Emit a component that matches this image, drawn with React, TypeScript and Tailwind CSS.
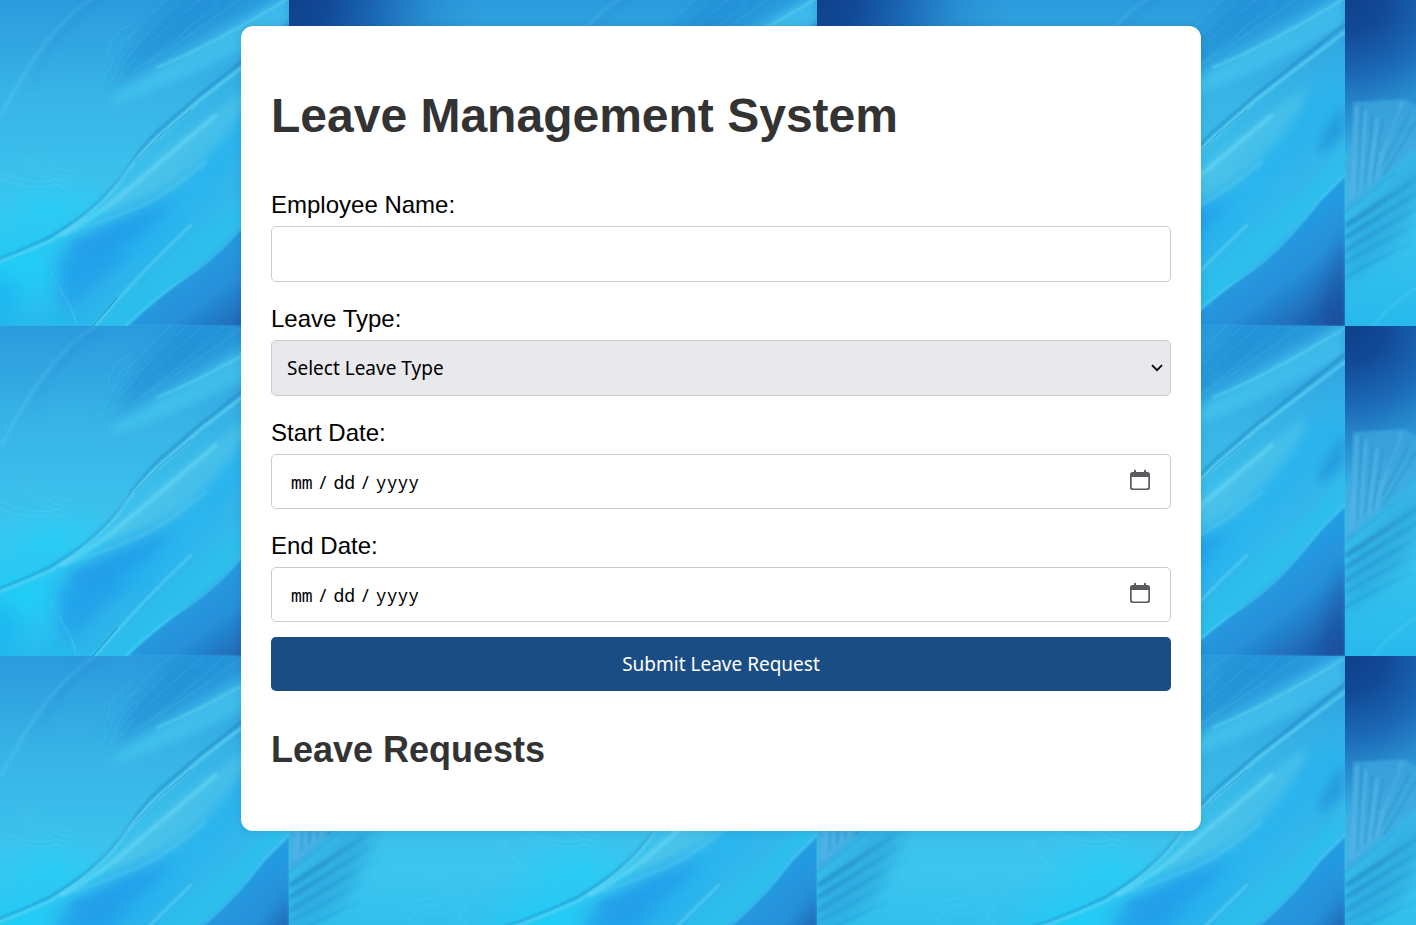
import type { ReactNode } from "react";

function Backdrop() {
  return (
    <svg aria-hidden="true" className="[grid-area:1/1] h-full w-full" preserveAspectRatio="none">
      <defs>
        <linearGradient id="base" x1="0" y1="0" x2="0" y2="1">
          <stop offset="0" stopColor="#2b9add" />
          <stop offset="0.3" stopColor="#38b4e6" />
          <stop offset="0.65" stopColor="#3cc6ef" />
          <stop offset="1" stopColor="#27b9ec" />
        </linearGradient>
        <linearGradient id="corner" x1="0.35" y1="0.2" x2="1" y2="1">
          <stop offset="0" stopColor="#22a8ea" />
          <stop offset="0.55" stopColor="#2690da" />
          <stop offset="1" stopColor="#1a4c9b" />
        </linearGradient>
        <radialGradient id="navy" cx="0" cy="0" r="1">
          <stop offset="0" stopColor="#0e3f8a" />
          <stop offset="0.2" stopColor="#124a97" />
          <stop offset="0.42" stopColor="#1a66b4" stopOpacity="0.95" />
          <stop offset="0.65" stopColor="#2585cb" stopOpacity="0.7" />
          <stop offset="1" stopColor="#2f9edb" stopOpacity="0" />
        </radialGradient>
        <radialGradient id="cyan">
          <stop offset="0" stopColor="#1fcef7" />
          <stop offset="1" stopColor="#25cbf5" stopOpacity="0" />
        </radialGradient>
        <linearGradient id="fan" x1="0" y1="0" x2="0" y2="1">
          <stop offset="0" stopColor="#3ba5de" />
          <stop offset="1" stopColor="#48ade3" />
        </linearGradient>
        <linearGradient id="streak" gradientUnits="userSpaceOnUse" x1="0" y1="0" x2="90" y2="0">
          <stop offset="0" stopColor="#1777bb" />
          <stop offset="0.4" stopColor="#1777bb" stopOpacity="0.8" />
          <stop offset="1" stopColor="#1777bb" stopOpacity="0" />
        </linearGradient>
        <filter id="b1"><feGaussianBlur stdDeviation="1" /></filter>
        <filter id="b2"><feGaussianBlur stdDeviation="1.6" /></filter>
        <filter id="b3"><feGaussianBlur stdDeviation="4" /></filter>
        <filter id="b8" x="-50%" y="-50%" width="200%" height="200%"><feGaussianBlur stdDeviation="9" /></filter>
        <pattern id="waves" x="-239" y="-4" width="528" height="330" patternUnits="userSpaceOnUse">
          <rect width="528" height="330" fill="url(#base)" />
          <ellipse cx="262" cy="268" rx="80" ry="60" fill="url(#cyan)" />
          <ellipse cx="290" cy="215" rx="75" ry="40" fill="url(#cyan)" opacity="0.7" />
          <path d="M0 0H150L70 60L30 100L0 150Z" fill="#2878c4" opacity="0.3" filter="url(#b8)" />
          <rect width="210" height="190" fill="url(#navy)" />

          <path d="M370 50L420 -5H500L440 35L350 90Z" fill="#1d8cd4" opacity="0.65" filter="url(#b8)" />
          <path d="M240 120Q285 30 335 0" stroke="#6ccff4" strokeWidth="3" fill="none" opacity="0.3" filter="url(#b2)" />
          <path d="M290 55Q315 20 350 0L330 0Q290 30 270 90Z" fill="#238fd6" opacity="0.4" filter="url(#b3)" />
          <path d="M360 95Q430 55 528 -5V30Q440 80 345 110Z" fill="#4acdf3" opacity="0.55" filter="url(#b3)" />
          <path d="M395 72Q455 47 528 2" stroke="#69daf8" strokeWidth="2" fill="none" opacity="0.6" filter="url(#b1)" />
          <g fill="none" stroke="#70d5f5" strokeWidth="1" opacity="0.16">
            <path d="M340 90Q360 40 410 0M348 88Q374 45 425 0M357 82Q390 42 443 0M370 78Q420 42 463 0M384 69Q433 37 483 0" />
            <path d="M258 154Q278 178 312 181M261 160Q281 184 310 187M266 150Q286 174 313 175M264 166Q284 188 308 193" />
            <path d="M347 60Q350 34 368 30M350 67Q357 42 372 38M354 75Q362 50 380 44" />
          </g>

          <path d="M300 300L310 246Q350 220 398 175L528 50V190L335 350Z" fill="#2db0ea" opacity="0.7" filter="url(#b8)" />
          <path d="M300 320L296 262Q340 227 415 202Q390 245 356 272Z" fill="#1e9bea" opacity="0.75" filter="url(#b8)" />
          <path d="M305 248Q370 229 416 203Q386 240 330 266Z" fill="#219de9" opacity="0.75" filter="url(#b3)" />
          <path d="M375 182Q440 125 490 91Q475 148 438 170Q395 205 335 217Z" fill="#52c6e9" opacity="0.65" filter="url(#b3)" />
          <path d="M528 95Q475 135 440 190Q405 235 365 262" stroke="#20b2f0" strokeWidth="26" fill="none" opacity="0.6" filter="url(#b8)" />
          <path d="M528 152Q485 200 430 240L320 335H370Q440 275 480 232L528 180Z" fill="#29c0ec" opacity="0.75" filter="url(#b3)" />
          <path d="M528 108Q505 130 500 158Q515 152 528 138Z" fill="#1889d3" opacity="0.5" filter="url(#b3)" />
          <path d="M366 330Q399 300 432 275T503 204L528 179V330Z" fill="url(#corner)" filter="url(#b1)" />
          <path d="M500 330Q515 270 528 230V330Z" fill="#194796" opacity="0.5" filter="url(#b8)" />
          <ellipse cx="240" cy="302" rx="18" ry="23" fill="#0eadf0" opacity="0.5" filter="url(#b8)" />

          <g fill="none" strokeLinecap="round">
            <path d="M210 273Q242 263 289 241Q335 215 363 178Q379 151 400 132L440 98L528 28" stroke="#1873b6" strokeWidth="3" opacity="0.4" filter="url(#b1)" />
            <path d="M180 286Q237 268 289 245Q345 210 366 175Q382 154 402 137L440 103Q475 76 528 36" stroke="#65d8f8" strokeWidth="3" opacity="0.65" filter="url(#b1)" />
            <path d="M374 166L400 139L430 114" stroke="#1a6fae" strokeWidth="1" opacity="0.5" />
            <path d="M301 239Q340 218 370 191L455 119" stroke="#6cdaf8" strokeWidth="4" opacity="0.6" filter="url(#b2)" />
            <path d="M307 237Q353 222 378 211T445 166" stroke="#5ccdf0" strokeWidth="3" opacity="0.45" filter="url(#b2)" />
            <path d="M334 330Q378 278 430 229" stroke="#63dbf8" strokeWidth="2" opacity="0.7" filter="url(#b1)" />
            <path d="M332 330L356 302" stroke="#14649d" strokeWidth="1" opacity="0.6" />
            <path d="M365 330Q391 304 427 280T503 204L528 179" stroke="#4fd4f8" strokeWidth="2" opacity="0.75" filter="url(#b1)" />
            <path d="M290 275Q303 300 318 330M300 295Q314 310 314 330" stroke="#7adcf6" strokeWidth="1" opacity="0.2" />
          </g>

          <path d="M8 106L60 103Q80 115 95 130L0 216V167Q8 152 8 106Z" fill="url(#fan)" opacity="0.75" filter="url(#b1)" />
          <g fill="none" stroke="#67bdea" strokeWidth="4" opacity="0.35" filter="url(#b1)">
            <path d="M12 110L7 203M21 114L14 198M32 122L24 190M43 137L31 183M57 106L34 158" />
          </g>
          <g fill="none" stroke="#1776b6" strokeWidth="2" opacity="0.3" filter="url(#b1)">
            <path d="M17 109L13 195M28 120L20 188M38 124L28 182M53 112L35 155M65 117L37 170M71 126L38 180" />
          </g>
          <path d="M0 218L60 170L90 170L60 240L0 290Z" fill="#238fce" opacity="0.4" filter="url(#b8)" />
          <g fill="none" stroke="url(#streak)" filter="url(#b2)">
            <path d="M0 217L50 176" strokeWidth="1" opacity="0.8" />
            <path d="M0 230Q35 208 90 170" strokeWidth="5" opacity="0.5" />
            <path d="M0 242Q35 220 90 186" strokeWidth="4" opacity="0.45" />
            <path d="M0 255Q35 233 90 202" strokeWidth="4" opacity="0.35" />
            <path d="M0 267Q28 250 80 224M0 282Q25 266 70 246" strokeWidth="3" opacity="0.25" />
          </g>
          <path d="M28 330Q45 306 90 280" stroke="#60d3f2" strokeWidth="2" fill="none" opacity="0.4" filter="url(#b1)" />
          <g fill="none" stroke="#80e3f9" strokeWidth="1" opacity="0.16">
            <path d="M165 270L220 185M178 269L140 215M190 270L152 214M214 185L250 235M112 260Q125 240 145 243M118 266Q130 245 151 250M124 270Q137 253 158 258M235 181Q265 196 300 188M241 176Q270 191 300 183" />
          </g>
        </pattern>
      </defs>
      <rect width="100%" height="100%" fill="url(#waves)" />
    </svg>
  );
}

function Field({ id, label, children }: { id: string; label: string; children: ReactNode }) {
  return (
    <div>
      <label htmlFor={id} className="mb-[7px] block text-2xl leading-[29px] text-black">
        {label}
      </label>
      {children}
    </div>
  );
}

function DateField({ id, label }: { id: string; label: string }) {
  return (
    <Field id={id} label={label}>
      <div className="grid items-center">
        <input
          id={id}
          type="date"
          className="h-[55px] w-full rounded-[5px] border border-[#cccccc] bg-white px-[19px] font-['Noto_Sans_Mono','Liberation_Mono',monospace] text-lg text-black outline-none [grid-area:1/1] [&::-webkit-calendar-picker-indicator]:opacity-0 [&::-webkit-datetime-edit-day-field]:p-0 [&::-webkit-datetime-edit-month-field]:p-0 [&::-webkit-datetime-edit-text]:px-[5px] [&::-webkit-datetime-edit-year-field]:p-0"
        />
        <svg
          width="22"
          height="22"
          viewBox="0 0 22 22"
          aria-hidden="true"
          className="pointer-events-none z-10 mr-5 mb-1 justify-self-end [grid-area:1/1]"
        >
          <path
            fill="#5b5b5f"
            fillRule="evenodd"
            d="M5 1.700a1 1 0 0 1 2 0V3h8V1.700a1 1 0 0 1 2 0V3h1.500a2.500 2.500 0 0 1 2.500 2.500v13a2.500 2.500 0 0 1-2.500 2.500h-15A2.500 2.500 0 0 1 1 18.500v-13A2.500 2.500 0 0 1 3.500 3H5zM2.700 8v10q0 1.400 1.400 1.400h13.800q1.400 0 1.400-1.400V8z"
          />
        </svg>
      </div>
    </Field>
  );
}

export default function App() {
  return (
    <div className="grid min-h-screen grid-cols-1 font-['Liberation_Sans',Arial,sans-serif]">
      <Backdrop />
      <div className="z-10 py-[26px] pl-[26px] [grid-area:1/1]">
        <main className="mx-auto w-full max-w-[960px] rounded-xl bg-white px-[30px] py-[60px] shadow-[0_0_10px_rgba(0,0,0,0.1)]">
          <h1 className="mb-[45px] text-5xl leading-[59px] font-bold text-[#333333]">Leave Management System</h1>
          <form onSubmit={(event) => event.preventDefault()}>
            <div className="mb-[15px] flex flex-col gap-[22px]">
              <Field id="employee" label="Employee Name:">
                <input
                  id="employee"
                  type="text"
                  className="block h-14 w-full rounded-[5px] border border-[#cccccc] bg-white px-[15px] font-['Noto_Sans',sans-serif] text-[19px] text-black outline-none"
                />
              </Field>
              <Field id="type" label="Leave Type:">
                <div className="grid items-center">
                  <select
                    id="type"
                    defaultValue=""
                    className="block h-14 w-full appearance-none rounded-[5px] border border-[#cccccc] bg-[#e9e9ed] px-[15px] font-['Noto_Sans',sans-serif] text-[19px] text-black outline-none [grid-area:1/1]"
                  >
                    <option value="">Select Leave Type</option>
                    <option>Sick Leave</option>
                    <option>Casual Leave</option>
                    <option>Annual Leave</option>
                  </select>
                  <svg width="12" height="8" viewBox="0 0 12 8" aria-hidden="true" className="pointer-events-none z-10 mr-2 justify-self-end [grid-area:1/1]">
                    <path d="M1 1.200l5 5 5-5" fill="none" stroke="#000" strokeWidth="1.800" />
                  </svg>
                </div>
              </Field>
              <DateField id="start" label="Start Date:" />
              <DateField id="end" label="End Date:" />
            </div>
            <button
              type="submit"
              className="block h-[54px] w-full rounded-[5px] bg-[#1b4d85] font-['Noto_Sans',sans-serif] text-[19px] text-white"
            >
              Submit Leave Request
            </button>
          </form>
          <h2 className="mt-[38px] text-4xl leading-[42px] font-bold text-[#333333]">Leave Requests</h2>
        </main>
      </div>
    </div>
  );
}
